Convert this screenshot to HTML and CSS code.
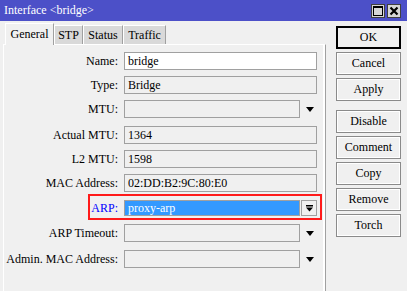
FILE: index.html
```html
<!DOCTYPE html>
<html lang="en">
<head>
  <meta charset="UTF-8">
  <title>Interface &lt;bridge&gt;</title>
  <link rel="stylesheet" href="styles.css">
</head>
<body>
  <div class="titlebar">
    <span class="title">Interface &lt;bridge&gt;</span>
    <div class="wincontrols">
      <span class="wbtn">
        <svg width="12" height="12" viewBox="0 0 12 12"><rect x="1.5" y="1.5" width="9" height="9" fill="none" stroke="#000" stroke-width="1"/><rect x="1" y="1" width="10" height="2" fill="#000"/></svg>
      </span>
      <span class="wbtn">
        <svg width="12" height="12" viewBox="0 0 12 12"><path d="M2.5 2.5 L9.5 9.5 M9.5 2.5 L2.5 9.5" stroke="#000" stroke-width="2.2" fill="none"/></svg>
      </span>
    </div>
  </div>

  <div class="main">
    <div class="left">
      <div class="tabs">
        <div class="tab active">General</div>
        <div class="tab stp">STP</div>
        <div class="tab status">Status</div>
        <div class="tab traffic">Traffic</div>
      </div>
      <div class="panel">
        <div class="row">
          <label>Name:</label>
          <div class="field white">bridge</div>
        </div>
        <div class="row">
          <label>Type:</label>
          <div class="field">Bridge</div>
        </div>
        <div class="row">
          <label>MTU:</label>
          <div class="combo"><div class="field"></div><span class="arrow"></span></div>
        </div>
        <div class="row push2">
          <label>Actual MTU:</label>
          <div class="field">1364</div>
        </div>
        <div class="row">
          <label>L2 MTU:</label>
          <div class="field">1598</div>
        </div>
        <div class="row">
          <label>MAC Address:</label>
          <div class="field">02:DD:B2:9C:80:E0</div>
        </div>
        <div class="row push1 arp">
          <label class="blue">ARP:</label>
          <div class="combo">
            <div class="field selected">proxy-arp</div>
            <span class="dropbtn">
              <svg width="9" height="9" viewBox="0 0 9 9"><rect x="1" y="1" width="7" height="1.5" fill="#000"/><path d="M1 3.5 H8 L4.5 7.5 Z" fill="#000"/></svg>
            </span>
          </div>
          <div class="highlight"></div>
        </div>
        <div class="row push1">
          <label>ARP Timeout:</label>
          <div class="combo"><div class="field"></div><span class="arrow"></span></div>
        </div>
        <div class="row push2">
          <label>Admin. MAC Address:</label>
          <div class="combo"><div class="field"></div><span class="arrow"></span></div>
        </div>
      </div>
    </div>

    <div class="buttons">
      <button class="default">OK</button>
      <button>Cancel</button>
      <button>Apply</button>
      <button class="gap">Disable</button>
      <button>Comment</button>
      <button>Copy</button>
      <button>Remove</button>
      <button>Torch</button>
    </div>
  </div>
</body>
</html>
```

FILE: styles.css
```css
body {
  margin: 0;
  background-color: #f0f0f0;
  font-family: "Liberation Serif", "Times New Roman", serif;
  font-size: 12px;
  color: #000;
  overflow: hidden;
}
.titlebar {
  height: 21px;
  background-color: #4c50c8;
  display: flex;
  align-items: center;
  justify-content: space-between;
  padding: 0 6px 0 4px;
}
.title {
  color: #fff;
  font-size: 12px;
}
.wincontrols {
  display: flex;
  gap: 2px;
  margin-top: 1px;
}
.wbtn {
  width: 14px;
  height: 14px;
  box-sizing: border-box;
  background-color: #d6d6d6;
  border: 1px solid #404040;
  display: flex;
  align-items: center;
  justify-content: center;
}
.main {
  display: flex;
}
.left {
  width: 326px;
}
.tabs {
  display: flex;
  align-items: flex-end;
  height: 23px;
  padding-left: 5px;
  box-sizing: border-box;
}
.tab {
  height: 19px;
  box-sizing: border-box;
  padding-top: 2px;
  text-align: center;
  background-color: #d9d9d9;
  border-left: 1px solid #fff;
  border-top: 1px solid #fff;
  border-right: 1px solid #a0a0a0;
}
.tab.stp { width: 29px; }
.tab.status { width: 40px; }
.tab.traffic { width: 43px; }
.tab.active {
  height: 22px;
  margin-bottom: -1px;
  padding-top: 3px;
  background-color: #f0f0f0;
  position: relative;
  z-index: 1;
  width: 49px;
}
.panel {
  margin-left: 3px;
  width: 323px;
  height: 260px;
  box-sizing: border-box;
  border-top: 1px solid #fff;
  border-left: 1px solid #fff;
  border-right: 1px solid #a0a0a0;
  box-shadow: inset -2px 0 0 #fff;
  padding-top: 7px;
  display: flex;
  flex-direction: column;
  gap: 6px;
}
.row {
  display: grid;
  grid-template-columns: 114px 193px;
  column-gap: 6px;
  height: 18px;
  align-items: center;
  position: relative;
}
.row label {
  text-align: right;
  white-space: nowrap;
}
.push1 { margin-top: 1px; }
.push2 { margin-top: 2px; }
.blue { color: #0000ff; }
.field {
  height: 18px;
  box-sizing: border-box;
  border: 1px solid #a0a0a0;
  background-color: #f0f0f0;
  padding: 1px 3px 0;
  line-height: 15px;
  white-space: nowrap;
  overflow: hidden;
}
.field.white {
  background-color: #fff;
}
.combo {
  display: flex;
  align-items: center;
}
.combo .field {
  width: 176px;
  flex: none;
}
.arrow {
  width: 0;
  height: 0;
  margin-left: 6px;
  border-left: 4.5px solid transparent;
  border-right: 4.5px solid transparent;
  border-top: 5px solid #000;
}
.arp .field.selected {
  height: 16px;
  line-height: 14px;
  padding-top: 0;
  background-color: #3399ff;
  color: #fff;
}
.dropbtn {
  width: 17px;
  height: 16px;
  box-sizing: border-box;
  margin-left: 1px;
  border: 1px solid #a0a0a0;
  background-color: #f0f0f0;
  display: flex;
  align-items: center;
  justify-content: center;
}
.highlight {
  position: absolute;
  left: 84px;
  top: -5px;
  width: 234px;
  height: 26px;
  box-sizing: border-box;
  border: 2px solid #ff1a1a;
  pointer-events: none;
}
.buttons {
  margin-left: 10px;
  padding-top: 5px;
  display: flex;
  flex-direction: column;
  gap: 3px;
}
button {
  width: 65px;
  height: 23px;
  box-sizing: border-box;
  font-family: "Liberation Serif", "Times New Roman", serif;
  font-size: 12px;
  color: #000;
  background-color: #f0f0f0;
  border: 1px solid #8a8a8a;
  box-shadow: inset 0 0 0 1px #fff;
  padding: 0;
}
button.default {
  border: 2px solid #000;
  box-shadow: none;
}
button.gap {
  margin-top: 6px;
}
```
